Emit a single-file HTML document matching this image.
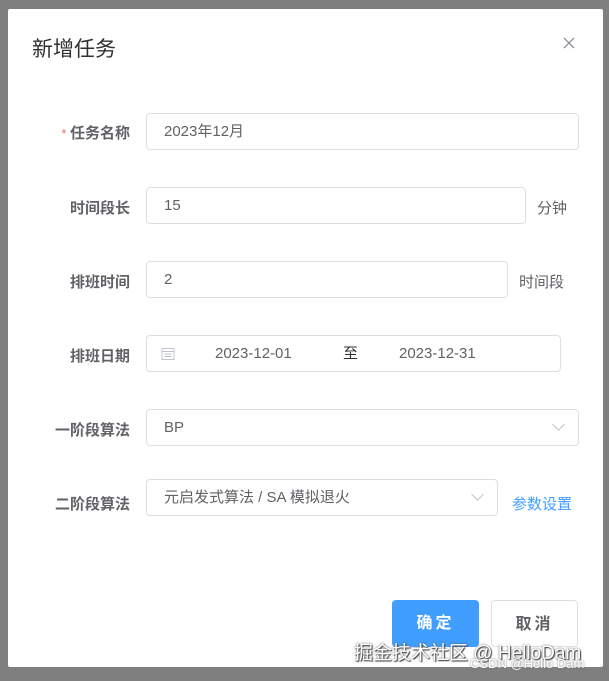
<!DOCTYPE html>
<html><head><meta charset="utf-8"><style>
*{box-sizing:border-box;margin:0;padding:0}
body{width:609px;height:681px;background:#7f7f7f;position:relative;overflow:hidden;font-family:"Liberation Sans","Noto Sans CJK SC",sans-serif;}
.dlg{position:absolute;left:8px;top:9px;width:595px;height:658px;background:#fff;border-radius:2px}
.t{position:absolute;left:32px;top:33px;font-size:21px;color:#303133}
.x{position:absolute;left:562px;top:36px}
.lb{position:absolute;right:479px;font-size:15px;font-weight:bold;color:#606266;width:120px;text-align:right}
.in{position:absolute;left:146px;height:37px;border:1px solid #dcdfe6;border-radius:4px;font-size:15px;color:#606266;padding-left:17px;line-height:36px;background:#fff}
.sf{position:absolute;font-size:15px;color:#606266}
.ch{position:absolute;right:15px;top:10px;width:9px;height:9px;border-right:1px solid #c0c4cc;border-bottom:1px solid #c0c4cc;transform:rotate(45deg)}
.btn{position:absolute;top:600px;height:47px;width:87px;border-radius:4px;font-size:16px;text-align:center;line-height:47px;letter-spacing:3px;font-weight:bold}
</style></head><body>
<div class="dlg"></div>
<div class="t">新增任务</div>
<svg class="x" width="14" height="14" viewBox="0 0 14 14"><path d="M2 2L12 12M12 2L2 12" stroke="#909399" stroke-width="1.3"/></svg>

<div class="lb" style="top:122px"><span style="color:#f56c6c;font-weight:normal;font-size:13px">* </span>任务名称</div>
<div class="in" style="top:113px;width:433px">2023年12月</div>

<div class="lb" style="top:197px">时间段长</div>
<div class="in" style="top:187px;width:380px">15</div>
<div class="sf" style="left:537px;top:197px">分钟</div>

<div class="lb" style="top:271px">排班时间</div>
<div class="in" style="top:261px;width:362px">2</div>
<div class="sf" style="left:519px;top:271px">时间段</div>

<div class="lb" style="top:345px">排班日期</div>
<div class="in" style="top:335px;width:415px;padding-left:0">
<svg style="position:absolute;left:14px;top:11px" width="14" height="14" viewBox="0 0 14 14"><rect x="1" y="1.5" width="12" height="11" fill="none" stroke="#c0c4cc"/><path d="M1 4.5H13M3.5 7H10.5M3.5 9.5H10.5" stroke="#c0c4cc"/></svg>
<span style="position:absolute;left:68px">2023-12-01</span>
<span style="position:absolute;left:196px;color:#303133">至</span>
<span style="position:absolute;left:252px">2023-12-31</span>
</div>

<div class="lb" style="top:419px">一阶段算法</div>
<div class="in" style="top:409px;width:433px">BP<div class="ch"></div></div>

<div class="lb" style="top:493px">二阶段算法</div>
<div class="in" style="top:479px;width:352px">元启发式算法 / SA 模拟退火<div class="ch"></div></div>
<div class="sf" style="left:512px;top:493px;color:#409eff">参数设置</div>

<div class="btn" style="left:392px;background:#409eff;color:#fff">确定</div>
<div class="btn" style="left:491px;border:1px solid #dcdfe6;color:#606266;background:#fff">取消</div>

<div style="position:absolute;left:354px;top:638px;font-size:19px;color:#fff;text-shadow:0 0 2px #555,1px 1px 1px #333">掘金技术社区 @ HelloDam</div>
<div style="position:absolute;left:470px;top:656px;font-size:13px;color:#fff;text-shadow:0 0 2px #666">CSDN @Hello Dam</div>
</body></html>
